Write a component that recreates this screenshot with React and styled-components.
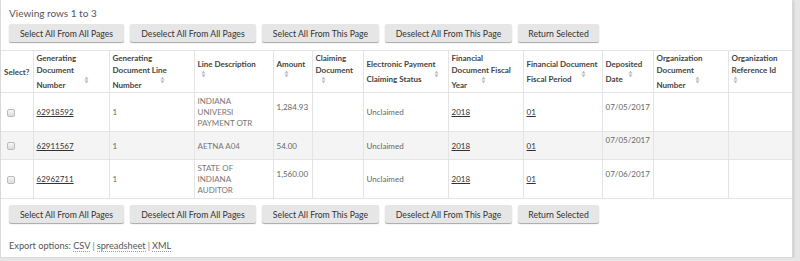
import React from "react";
import styled, { createGlobalStyle } from "styled-components";

const Global = createGlobalStyle`
  html, body { margin: 0; padding: 0; background: #e6e6e6; }
  body { font-family: Lato, "Open Sans", sans-serif; }
`;

const Panel = styled.div`
  width: 791px;
  height: 257px;
  background: #fff;
  border: 1px solid #d9d9d9;
  border-top: none;
  box-shadow: 1px 1px 2px rgba(0, 0, 0, 0.12);
  display: flex;
  flex-direction: column;
  overflow: hidden;
`;

const Info = styled.div`
  padding: 7px 8px 0;
  font-size: 10px;
  line-height: 13px;
  color: #555;
`;

const ButtonBar = styled.div`
  display: flex;
  gap: 6px;
  padding: 0 8px;
  margin-top: ${(p) => p.$top}px;
`;

const Button = styled.button`
  width: ${(p) => p.$w}px;
  height: 18px;
  padding: 0;
  font-family: Lato, "Open Sans", sans-serif;
  font-size: 8.7px;
  color: #333;
  background: #e6e6e6;
  border: none;
  border-radius: 2px;
  box-shadow: 0 1px 1px rgba(0, 0, 0, 0.35);
`;

const Table = styled.table`
  margin-top: 8px;
  width: 791px;
  table-layout: fixed;
  border-collapse: collapse;
`;

const Th = styled.th`
  padding: 1px 3px 1px;
  border: 1px solid #e4e4e4;
  border-left: ${(p) => (p.$first ? "none" : "1px solid #e4e4e4")};
  border-right: ${(p) => (p.$last ? "none" : "1px solid #e4e4e4")};
  text-align: left;
  vertical-align: middle;
  font-size: 8px;
  line-height: 12px;
  font-weight: bold;
  color: #444;
`;

const Row = styled.tr`
  background: ${(p) => (p.$alt ? "#f4f4f4" : "#fff")};
`;

const Td = styled.td`
  padding: 3px 2px 2px 3px;
  border: 1px solid #e4e4e4;
  border-left: ${(p) => (p.$first ? "none" : "1px solid #e4e4e4")};
  border-right: ${(p) => (p.$last ? "none" : "1px solid #e4e4e4")};
  vertical-align: middle;
  font-size: 8px;
  line-height: 11px;
  color: ${(p) => (p.$upper ? "#777" : "#666")};
`;

const Link = styled.a`
  color: #333;
  text-decoration: underline;
`;

const Check = styled.input`
  appearance: none;
  display: block;
  margin: 0 0 0 3px;
  width: 8px;
  height: 8px;
  border: 1px solid #bbb;
  border-radius: 2px;
  background: linear-gradient(#f6f6f6, #dcdcdc);
`;

const Sort = styled.svg`
  display: inline-block;
  width: 5px;
  height: 8px;
  vertical-align: 4px;
  margin-left: ${(p) => p.$gap}px;
`;

const Export = styled.div`
  margin-top: 16px;
  padding: 0 8px;
  font-size: 9.2px;
  line-height: 13px;
  color: #555;
`;

const ExportLink = styled.a`
  color: #555;
  text-decoration: none;
  border-bottom: 1px dotted #999;
`;

const Sep = styled.span`
  color: #777;
  margin: 0 2px;
`;

const SortIcon = ({ gap }) => (
  <Sort $gap={gap} viewBox="0 0 5 8">
    <path d="M0.5 3.5 L2.5 0.5 L4.5 3.5 Z M0.5 4.5 L2.5 7.5 L4.5 4.5 Z" fill="#bdbdbd" />
  </Sort>
);

const widths = [32, 76, 85, 79, 39, 51, 85, 75, 79, 51, 75, 64];

const headers = [
  { lines: ["Select?"], icon: null },
  { lines: ["Generating", "Document", "Number"], icon: 18 },
  { lines: ["Generating", "Document Line", "Number"], icon: 18 },
  { lines: ["Line Description"], icon: 3, own: true },
  { lines: ["Amount"], icon: 7, own: true },
  { lines: ["Claiming", "Document"], icon: 5, own: true },
  { lines: ["Electronic Payment", "Claiming Status"], icon: 13 },
  { lines: ["Financial", "Document Fiscal", "Year"], icon: 14 },
  { lines: ["Financial Document", "Fiscal Period"], icon: 9 },
  { lines: ["Deposited", "Date"], icon: 5 },
  { lines: ["Organization", "Document", "Number"], icon: 9 },
  { lines: ["Organization", "Reference Id"], icon: 1, own: true },
];

const rows = [
  { doc: "62918592", desc: ["INDIANA", "UNIVERSI", "PAYMENT OTR"], amount: "1,284.93", amountPad: true, date: "07/05/2017" },
  { doc: "62911567", desc: ["AETNA A04"], amount: "54.00", amountPad: false, date: "07/05/2017" },
  { doc: "62962711", desc: ["STATE OF", "INDIANA", "AUDITOR"], amount: "1,560.00", amountPad: true, date: "07/06/2017" },
];

const buttons = [
  { label: "Select All From All Pages", w: 115 },
  { label: "Deselect All From All Pages", w: 126 },
  { label: "Select All From This Page", w: 117 },
  { label: "Deselect All From This Page", w: 127 },
  { label: "Return Selected", w: 81 },
];

const Buttons = ({ top }) => (
  <ButtonBar $top={top}>
    {buttons.map((b) => (
      <Button key={b.label} $w={b.w}>
        {b.label}
      </Button>
    ))}
  </ButtonBar>
);

const withBreaks = (lines) =>
  lines.map((l, i) => (
    <React.Fragment key={i}>
      {i > 0 && <br />}
      {l}
    </React.Fragment>
  ));

export default function App() {
  return (
    <>
      <Global />
      <Panel>
        <Info>Viewing rows 1 to 3</Info>
        <Buttons top={4} />
        <Table>
          <colgroup>
            {widths.map((w, i) => (
              <col key={i} style={{ width: w }} />
            ))}
          </colgroup>
          <thead>
            <tr>
              {headers.map((h, i) => (
                <Th key={i} $first={i === 0} $last={i === headers.length - 1}>
                  {withBreaks(h.lines)}
                  {h.icon !== null && h.own && <br />}
                  {h.icon !== null && <SortIcon gap={h.icon} />}
                </Th>
              ))}
            </tr>
          </thead>
          <tbody>
            {rows.map((r, i) => (
              <Row key={i} $alt={i % 2 === 1}>
                <Td $first>
                  <Check type="checkbox" />
                </Td>
                <Td>
                  <Link>{r.doc}</Link>
                </Td>
                <Td>1</Td>
                <Td $upper>{withBreaks(r.desc)}</Td>
                <Td>
                  {r.amount}
                  {r.amountPad && (
                    <>
                      <br />
                      &nbsp;
                    </>
                  )}
                </Td>
                <Td></Td>
                <Td>Unclaimed</Td>
                <Td>
                  <Link>2018</Link>
                </Td>
                <Td>
                  <Link>01</Link>
                </Td>
                <Td>
                  {r.date}
                  <br />
                  &nbsp;
                </Td>
                <Td></Td>
                <Td $last></Td>
              </Row>
            ))}
          </tbody>
        </Table>
        <Buttons top={6} />
        <Export>
          Export options: <ExportLink>CSV</ExportLink>
          <Sep>|</Sep>
          <ExportLink>spreadsheet</ExportLink>
          <Sep>|</Sep>
          <ExportLink>XML</ExportLink>
        </Export>
      </Panel>
    </>
  );
}
